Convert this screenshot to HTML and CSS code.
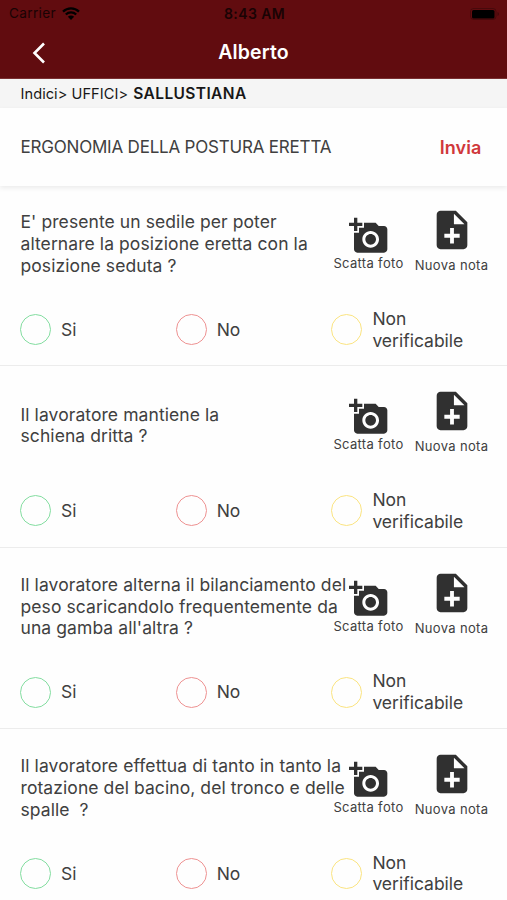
FILE: index.html
```html
<!DOCTYPE html>
<html lang="it">
<head>
<meta charset="utf-8">
<title>Alberto</title>
<link rel="stylesheet" href="styles.css">
</head>
<body>
<svg class="defs" width="0" height="0">
  <symbol id="camera" viewBox="0 0 24 24"><path d="M3 4V1h2v3h3v2H5v3H3V6H0V4h3zm3 6V7h3V4h7l1.83 2H21c1.1 0 2 .9 2 2v12c0 1.1-.9 2-2 2H5c-1.1 0-2-.9-2-2V10h3zm7 9c2.76 0 5-2.24 5-5s-2.24-5-5-5-5 2.24-5 5 2.24 5 5 5zm-3.2-5c0 1.77 1.43 3.2 3.2 3.2s3.2-1.43 3.2-3.2-1.43-3.2-3.2-3.2-3.2 1.43-3.2 3.2z"/></symbol>
  <symbol id="note" viewBox="0 0 24 24"><path d="M14 2H6c-1.1 0-1.99.9-1.99 2L4 20c0 1.1.89 2 1.99 2H18c1.1 0 2-.9 2-2V8l-6-6zm2 14h-3v3h-2v-3H8v-2h3v-3h2v3h3v2zm-3-7V3.5L18.5 9H13z"/></symbol>
</svg>
<header class="top">
  <div class="status">
    <div class="carrier"><span>Carrier</span>
      <svg class="wifi" viewBox="0 0 18 13"><path d="M1 4.6a11.6 11.6 0 0 1 16 0M3.8 7.5a7.5 7.5 0 0 1 10.4 0" fill="none" stroke="#000" stroke-width="2.3"/><path d="M9 13L5.9 9.7a4.4 4.4 0 0 1 6.2 0z"/></svg>
    </div>
    <span class="clock">8:43 AM</span>
    <svg class="battery" viewBox="0 0 30 12"><rect x=".5" y=".5" width="25.500" height="11" rx="3" fill="none" stroke="#000" stroke-opacity=".25"/><rect x="2" y="2" width="22.500" height="8.500" rx="1.500"/><path d="M27.500 4v4q1.500-.6 1.500-2t-1.500-2" opacity=".3"/></svg>
  </div>
  <div class="nav">
    <svg class="back" viewBox="0 0 14 22"><path d="M12 1.500L2.500 11 12 20.500" fill="none" stroke="#fff" stroke-width="2.600"/></svg>
    <h1>Alberto</h1>
  </div>
</header>
<nav class="crumbs"><span>Indici&gt; UFFICI&gt;</span> <b>SALLUSTIANA</b></nav>
<section class="section"><h2>ERGONOMIA DELLA POSTURA ERETTA</h2><a class="send">Invia</a></section>
<main>
  <article class="item">
    <div class="question">
      <p>E' presente un sedile per poter<br>alternare la posizione eretta con la<br>posizione seduta ?</p>
      <div class="action photo"><svg><use href="#camera"/></svg><span>Scatta foto</span></div>
      <div class="action note"><svg><use href="#note"/></svg><span>Nuova nota</span></div>
    </div>
    <div class="answers"><label><i class="yes"></i>Si</label><label><i class="no"></i>No</label><label><i class="na"></i><span>Non<br>verificabile</span></label></div>
  </article>
  <article class="item">
    <div class="question">
      <p>Il lavoratore mantiene la<br>schiena dritta ?</p>
      <div class="action photo"><svg><use href="#camera"/></svg><span>Scatta foto</span></div>
      <div class="action note"><svg><use href="#note"/></svg><span>Nuova nota</span></div>
    </div>
    <div class="answers"><label><i class="yes"></i>Si</label><label><i class="no"></i>No</label><label><i class="na"></i><span>Non<br>verificabile</span></label></div>
  </article>
  <article class="item">
    <div class="question">
      <p>Il lavoratore alterna il bilanciamento del<br>peso scaricandolo frequentemente da<br>una gamba all'altra ?</p>
      <div class="action photo"><svg><use href="#camera"/></svg><span>Scatta foto</span></div>
      <div class="action note"><svg><use href="#note"/></svg><span>Nuova nota</span></div>
    </div>
    <div class="answers"><label><i class="yes"></i>Si</label><label><i class="no"></i>No</label><label><i class="na"></i><span>Non<br>verificabile</span></label></div>
  </article>
  <article class="item">
    <div class="question">
      <p>Il lavoratore effettua di tanto in tanto la<br>rotazione del bacino, del tronco e delle<br>spalle&nbsp; ?</p>
      <div class="action photo"><svg><use href="#camera"/></svg><span>Scatta foto</span></div>
      <div class="action note"><svg><use href="#note"/></svg><span>Nuova nota</span></div>
    </div>
    <div class="answers"><label><i class="yes"></i>Si</label><label><i class="no"></i>No</label><label><i class="na"></i><span>Non<br>verificabile</span></label></div>
  </article>
</main>
</body>
</html>
```
FILE: styles.css
```css
* { box-sizing: border-box; }
body { margin: 0; height: 900px; overflow: hidden; background: #fefefe; color: #404040; font-family: Inter, "Liberation Sans", sans-serif; font-size: 17.5px; line-height: 21.7px; }
h1, h2, p { margin: 0; }
.defs { display: block; }
.top { height: 79px; background: #610c0f; border-bottom: 1px solid #7a3032; }
.status { height: 27px; padding: 0 7px 0 9px; display: grid; grid-template-columns: 1fr auto 1fr; align-items: center; color: #190304; font-size: 13.6px; }
.carrier { display: flex; align-items: center; gap: 6px; letter-spacing: .35px; }
.wifi { width: 18px; height: 13px; }
.clock { font-weight: 600; font-size: 14px; letter-spacing: .4px; }
.battery { justify-self: end; width: 30px; height: 12px; }
.nav { height: 51px; display: grid; grid-template-columns: 60px 1fr 60px; align-items: center; }
.back { width: 14px; height: 22px; margin-left: 32px; }
h1 { color: #fff; text-align: center; font-size: 19.5px; font-weight: 600; letter-spacing: .1px; }
.crumbs { height: 29px; padding: 4px 20.5px; background: #f5f5f5; color: #171717; font-size: 14.6px; letter-spacing: .05px; white-space: nowrap; }
.crumbs b { font-weight: 600; font-size: 15.5px; letter-spacing: .38px; margin-left: 1px; }
.section { height: 78px; margin-bottom: -1px; padding: 1px 25.5px 0 20.5px; display: flex; align-items: center; justify-content: space-between; box-shadow: 0 2px 5px #00000014; white-space: nowrap; }
h2 { font-size: 17px; font-weight: 400; letter-spacing: -.2px; }
.send { color: #d0383b; font-size: 18px; font-weight: 600; letter-spacing: .1px; }
.item { height: 181.3px; border-bottom: 1.5px solid #ececec; }
.question { height: 118px; padding-left: 20.5px; display: grid; grid-template-columns: 306.5px 83px 83px; white-space: nowrap; }
.question p { align-self: center; letter-spacing: .08px; }
.action { display: flex; flex-direction: column; align-items: center; font-size: 13px; line-height: 16px; letter-spacing: .33px; }
.action svg { display: block; fill: #303030; }
.photo { padding-top: 31px; }
.photo svg { width: 40px; height: 40px; margin-bottom: -1px; }
.note { padding-top: 22px; }
.note svg { width: 46px; height: 46px; margin-bottom: 4px; }
.answers { padding-left: 20px; height: 53px; display: grid; grid-template-columns: 155.7px 155.7px 1fr; align-items: center; }
.answers label { display: flex; align-items: center; gap: 10px; }
.answers i { width: 31px; height: 31px; border: 1.3px solid; border-radius: 50%; }
.yes { color: #83dda0; }
.no { color: #ee9292; }
.na { color: #fbe481; }
```
